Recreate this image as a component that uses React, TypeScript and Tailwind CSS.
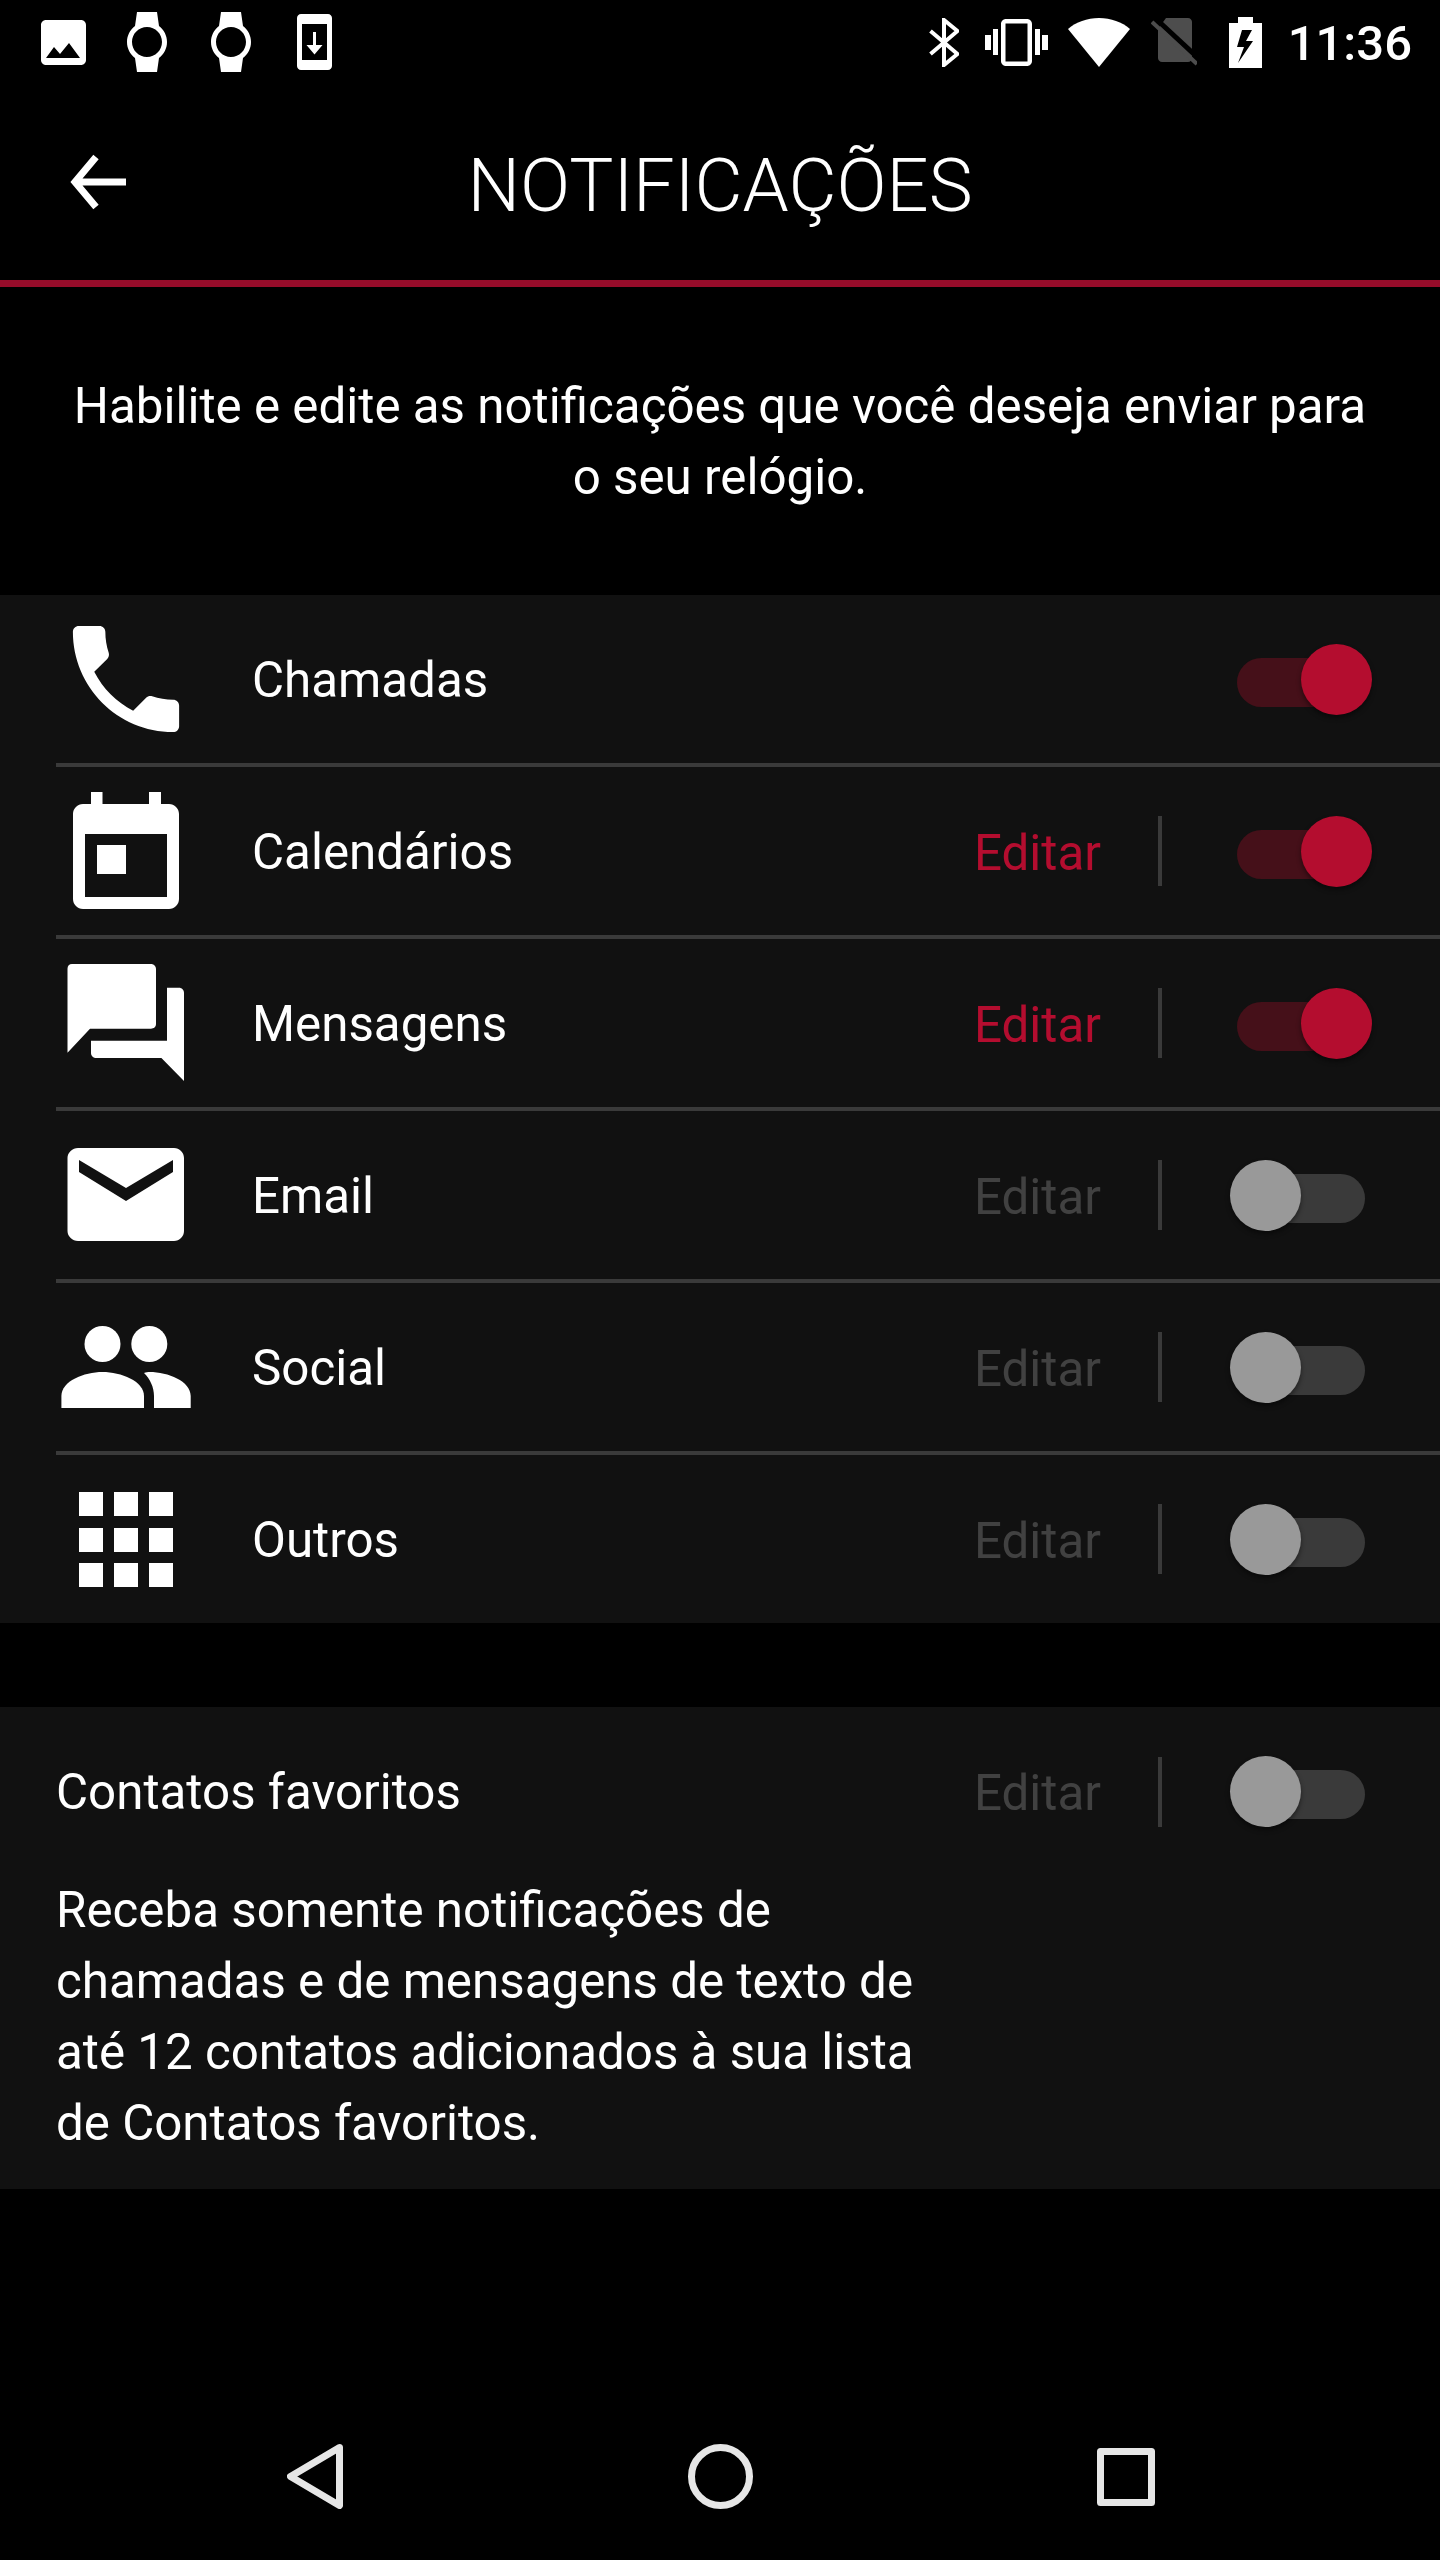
import { ReactNode } from "react";

const roboto = "font-['Roboto',sans-serif]";

const icons: Record<string, ReactNode> = {
  phone: (
    <svg viewBox="-0.2 -0.2 24.4 24.4" className="h-[144px] w-[144px]" fill="#fff">
      <path d="M6.62 10.79c1.44 2.83 3.76 5.14 6.59 6.59l2.2-2.2c.27-.27.67-.36 1.02-.24 1.12.37 2.33.57 3.57.57.55 0 1 .45 1 1V20c0 .55-.45 1-1 1-9.39 0-17-7.61-17-17 0-.55.45-1 1-1h3.5c.55 0 1 .45 1 1 0 1.25.2 2.45.57 3.57.11.35.03.74-.25 1.02l-2.2 2.2z" />
    </svg>
  ),
  calendar: (
    <svg viewBox="0 0 144 144" className="h-[144px] w-[144px]" fill="#fff">
      <path
        fillRule="evenodd"
        d="M37 13h11.500v12h46.500v-12h12v12h8c5.500 0 10 4.500 10 10v85c0 5.500-4.500 10-10 10h-86c-5.500 0-10-4.500-10-10v-85c0-5.500 4.500-10 10-10h8zM31 55v63h82v-63zM43 66h29v29h-29z"
      />
    </svg>
  ),
  messages: (
    <svg viewBox="0 0 144 144" className="h-[144px] w-[144px]" fill="#fff">
      <path d="M18 13h79c2.800 0 5 2.200 5 5v55c0 2.800-2.200 4.700-5 4.700h-61l-22.500 24v-84c0-2.800 1.700-4.700 4.500-4.700z" />
      <path d="M113 36.700h12c2.800 0 5 2.200 5 5v88.300l-22.600-23h-65.400c-2.800 0-5-2.200-5-5v-12.300h76z" />
    </svg>
  ),
  email: (
    <svg viewBox="0 0 144 144" className="h-[144px] w-[144px]" fill="#fff">
      <path
        fillRule="evenodd"
        d="M24 25h96c5.500 0 10 4.500 10 10v73c0 5.500-4.500 10-10 10h-96c-5.500 0-10.500-4.500-10.500-10v-73c0-5.500 5-10 10.500-10zM25 37v12l47 29 47-29v-12l-47 28z"
      />
    </svg>
  ),
  social: (
    <svg viewBox="0 0 144 144" className="h-[144px] w-[144px]" fill="#fff">
      <circle cx="48.500" cy="49" r="18" />
      <circle cx="95.300" cy="49" r="18" />
      <path d="M7.400 113v-12c0-15 22.600-24 41.100-24s41.500 9 41.500 24v12z" />
      <path d="M100 113v-12c0-9-4-17-10-23 2-1 4-1 5.500-1 18.500 0 41.200 9 41.200 24v12z" />
    </svg>
  ),
  apps: (
    <svg viewBox="0 0 144 144" className="h-[144px] w-[144px]" fill="#fff">
      <path d="M25 25h24v24h-24zM60 25h24v24h-24zM95 25h24v24h-24zM25 61h24v24h-24zM60 61h24v24h-24zM95 61h24v24h-24zM25 96h24v24h-24zM60 96h24v24h-24zM95 96h24v24h-24z" />
    </svg>
  ),
};

const rows = [
  { label: "Chamadas", icon: "phone", on: true, edit: false },
  { label: "Calendários", icon: "calendar", on: true, edit: true },
  { label: "Mensagens", icon: "messages", on: true, edit: true },
  { label: "Email", icon: "email", on: false, edit: true },
  { label: "Social", icon: "social", on: false, edit: true },
  { label: "Outros", icon: "apps", on: false, edit: true },
];

function Toggle({ on }: { on: boolean }) {
  return (
    <div className="relative h-[71px] w-[142px] shrink-0">
      <div
        className={`absolute left-[7px] top-[14px] h-[49px] w-[128px] rounded-full ${
          on ? "bg-[#451019]" : "bg-[#3a3a3a]"
        }`}
      />
      <div
        className={`absolute top-0 h-[71px] w-[71px] rounded-full shadow-[0_3px_5px_rgba(0,0,0,0.45)] ${
          on ? "left-[71px] bg-[#b40d2f]" : "left-0 bg-[#999999]"
        }`}
      />
    </div>
  );
}

function EditControl({ on }: { on: boolean }) {
  return (
    <div className="flex items-center">
      <span
        className={`pt-[3px] text-[49.3px] leading-[70px] ${on ? "text-[#b40d2f]" : "text-[#414141]"}`}
      >
        Editar
      </span>
      <div className="ml-[57px] h-[70px] w-[4px] bg-[#3a3a3a]" />
    </div>
  );
}

function Watch({ className }: { className: string }) {
  return (
    <svg viewBox="0 0 40 60" className={`h-[60px] w-[40px] ${className}`} fill="#fff">
      <path
        fillRule="evenodd"
        d="M10 0h20l2 14c5 4 8 9.500 8 16s-3 12-8 16l-2 14h-20l-2-14c-5-4-8-9.500-8-16s3-12 8-16zM20 15c-8.300 0-15 6.700-15 15s6.700 15 15 15 15-6.700 15-15-6.700-15-15-15z"
      />
    </svg>
  );
}

export default function App() {
  return (
    <div className={`flex h-[2560px] w-[1440px] flex-col bg-black text-white ${roboto}`}>
      {/* status bar */}
      <div className="flex h-[84px] items-center justify-between pl-[41px] pr-[28px]">
        <div className="flex items-center">
          <svg viewBox="0 0 45 45" className="h-[45px] w-[45px]" fill="#fff">
            <path
              fillRule="evenodd"
              d="M5 0h35c2.800 0 5 2.200 5 5v35c0 2.800-2.200 5-5 5h-35c-2.800 0-5-2.200-5-5v-35c0-2.800 2.200-5 5-5zM5 38h34l-11-15-9 11-6-7z"
            />
          </svg>
          <Watch className="ml-[41px]" />
          <Watch className="ml-[44px]" />
          <svg viewBox="0 0 35 56" className="ml-[46px] h-[56px] w-[35px]" fill="#fff">
            <path
              fillRule="evenodd"
              d="M4 0h27c2.200 0 4 1.800 4 4v48c0 2.200-1.800 4-4 4h-27c-2.200 0-4-1.800-4-4v-48c0-2.200 1.800-4 4-4zM5 10v36h25v-36zM16 18h3v13h6.500l-8 9.500-8-9.500h6.500z"
            />
          </svg>
        </div>
        <div className="flex items-center">
          <svg viewBox="0 0 30 49" className="h-[49px] w-[30px]" fill="none" stroke="#fff" strokeWidth="4">
            <path d="M1.500 13l27 23-13.500 11v-45l13.500 11-27 23" />
          </svg>
          <svg viewBox="0 0 64 47" className="ml-[25px] h-[47px] w-[64px]" fill="#fff">
            <path
              fillRule="evenodd"
              d="M22 0h21c2.800 0 5 2.200 5 5v37c0 2.800-2.200 5-5 5h-21c-2.800 0-5-2.200-5-5v-37c0-2.800 2.200-5 5-5zM21.500 4.500v38h22v-38z"
            />
            <path d="M1 16h6v15h-6zM9 10h5v26h-5zM51 10h5v26h-5zM58 16h6v15h-6z" />
          </svg>
          <svg viewBox="0 0 62 49" className="ml-[20px] h-[49px] w-[62px]" fill="#fff">
            <path d="M31 49L0 11C8 4 19 0 31 0s23 4 31 11z" />
          </svg>
          <svg viewBox="0 0 46 48" className="ml-[21px] h-[48px] w-[46px]">
            <path d="M15 0h22c2.200 0 4 1.800 4 4v36c0 2.200-1.800 4-4 4h-26c-2.200 0-4-1.800-4-4v-29z" fill="#4d4d4d" />
            <path d="M4 0L46 39" stroke="#000" strokeWidth="5" />
            <path d="M1 4L46 46" stroke="#4d4d4d" strokeWidth="4" />
          </svg>
          <svg viewBox="0 0 33 51" className="ml-[32px] h-[51px] w-[33px]" fill="#fff">
            <path
              fillRule="evenodd"
              d="M9 0h15v6h9v45h-33v-45h9zM13 13l-5 17h7l-6 16 15-22h-7l6-11z"
            />
          </svg>
          <span className="ml-[26px] pt-[3px] text-[49px] font-medium leading-none">11:36</span>
        </div>
      </div>

      {/* header */}
      <div className="relative flex h-[196px] items-center justify-center">
        <svg viewBox="0 0 56 56" className="absolute left-[70px] top-[70px] h-[56px] w-[56px]" fill="none" stroke="#fff" strokeWidth="7">
          <path d="M56 28H5M26 3L5 28l21 25" />
        </svg>
        <h1 className="mt-[8px] text-[74px] font-light leading-none">NOTIFICAÇÕES</h1>
      </div>
      <div className="h-[7px] bg-[#960c2a]" />

      {/* intro */}
      <p className="h-[308px] px-[70px] pt-[84px] text-center text-[49.3px] leading-[71px]">
        Habilite e edite as notificações que você deseja enviar para o seu relógio.
      </p>

      {/* categories */}
      <div className="flex flex-col bg-[#111111]">
        {rows.map((row, i) => (
          <div key={row.label}>
            {i > 0 && <div className="ml-[56px] h-[4px] bg-[#3a3a3a]" />}
            <div className="flex h-[168px] items-center pl-[54px] pr-[68px]">
              {icons[row.icon]}
              <span className="ml-[54px] flex-1 pt-[3px] text-[49.3px]">{row.label}</span>
              {row.edit && <EditControl on={row.on} />}
              <div className="ml-[68px]">
                <Toggle on={row.on} />
              </div>
            </div>
          </div>
        ))}
      </div>

      {/* favourite contacts */}
      <div className="mt-[84px] h-[482px] bg-[#111111] px-[56px] pt-[48px]">
        <div className="flex items-center pr-[12px]">
          <span className="flex-1 pt-[1px] text-[49.3px] leading-[70px]">Contatos favoritos</span>
          <EditControl on={false} />
          <div className="ml-[68px]">
            <Toggle on={false} />
          </div>
        </div>
        <p className="mt-[47px] w-[880px] text-[49.3px] leading-[71px]">
          Receba somente notificações de chamadas e de mensagens de texto de até 12 contatos adicionados à sua lista de Contatos favoritos.
        </p>
      </div>

      {/* navigation bar */}
      <div className="mt-auto flex h-[144px] items-start">
        <div className="flex w-full items-center justify-between pl-[287px] pr-[285px] pt-[28px]">
          <svg viewBox="0 0 56 65" className="h-[65px] w-[56px]" fill="none" stroke="#e6e6e6" strokeWidth="7" strokeLinejoin="round">
            <path d="M52.500 3.500L3.500 32.500l49 29z" />
          </svg>
          <svg viewBox="0 0 65 65" className="h-[65px] w-[65px]" fill="none" stroke="#e6e6e6" strokeWidth="7">
            <circle cx="32.500" cy="32.500" r="29" />
          </svg>
          <svg viewBox="0 0 58 58" className="h-[58px] w-[58px]" fill="none" stroke="#e6e6e6" strokeWidth="7" strokeLinejoin="round">
            <rect x="3.500" y="3.500" width="51" height="51" />
          </svg>
        </div>
      </div>
    </div>
  );
}
